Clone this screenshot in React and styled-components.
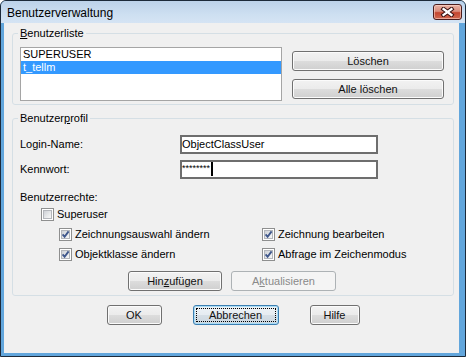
import React from 'react';
import styled, { createGlobalStyle } from 'styled-components';

const GlobalStyle = createGlobalStyle`
  html, body {
    margin: 0;
    padding: 0;
    background: #ffffff;
  }
  body {
    font-family: "Liberation Sans", Arial, sans-serif;
    font-size: 11px;
    color: #000;
  }
`;

const Window = styled.div`
  width: 466px;
  height: 357px;
  box-sizing: border-box;
  border: 1px solid #1c2a3a;
  border-radius: 6px 6px 0 0;
  overflow: hidden;
  display: flex;
  flex-direction: column;
  background: #62a6dc;
`;

const TitleBar = styled.div`
  height: 22px;
  flex: none;
  display: flex;
  align-items: center;
  justify-content: space-between;
  padding: 0 3px 0 6px;
  background: linear-gradient(#bcd2ea, #cddff1 60%, #d5e4f4);
`;

const Title = styled.span`
  font-size: 12px;
  line-height: 14px;
  margin-top: 2px;
`;

const CloseButton = styled.div`
  width: 29px;
  height: 16px;
  box-sizing: border-box;
  border: 1px solid #4a1c1c;
  border-radius: 3px;
  background: linear-gradient(#e9b2a4 0%, #d98c7c 45%, #c4452f 55%, #d06a52 100%);
  box-shadow: inset 0 0 0 1px rgba(255, 220, 210, 0.55);
  display: flex;
  align-items: center;
  justify-content: center;
`;

const Client = styled.div`
  flex: 1;
  margin: 0 6px 3px 3px;
  padding: 4px 5px 0 8px;
  background: #f0f0f0;
  display: flex;
  flex-direction: column;
`;

const Group = styled.fieldset`
  margin: 0;
  min-width: 0;
  padding: ${p => p.$pad};
  border: 1px solid #d5dfe5;
  border-radius: 3px;

  & + & {
    margin-top: 7px;
  }
`;

const Legend = styled.legend`
  padding: 0 2px;
  margin-left: -2px;
  line-height: 13px;
`;

const Accel = styled.span`
  text-decoration: underline;
`;

const ListRow = styled.div`
  display: flex;
  gap: 10px;
`;

const ListBox = styled.div`
  width: 262px;
  height: 54px;
  box-sizing: border-box;
  border: 1px solid #a5a5a5;
  background: #fff;
`;

const ListItem = styled.div`
  line-height: 13px;
  padding-left: 2px;
  background: ${p => (p.$selected ? '#3399ff' : 'transparent')};
  color: ${p => (p.$selected ? '#fff' : '#000')};
`;

const ButtonColumn = styled.div`
  flex: 1;
  display: flex;
  flex-direction: column;
  gap: 8px;
  margin-top: 4px;
`;

const Button = styled.button`
  width: ${p => (p.$w ? `${p.$w}px` : '100%')};
  height: 20px;
  box-sizing: border-box;
  padding: 0;
  margin: 0;
  font-family: "Liberation Sans", Arial, sans-serif;
  font-size: 11px;
  font-weight: 400;
  color: #111;
  border: 1px solid #707070;
  border-radius: 3px;
  background: linear-gradient(#f2f2f2 0%, #ebebeb 49%, #dddddd 50%, #cfcfcf 100%);
  box-shadow: inset 0 0 0 1px #fbfbfb;

  &:disabled {
    color: #8a8a8a;
    border-color: #adb2b5;
    background: #f4f4f4;
    box-shadow: none;
  }
`;

const DefaultButton = styled(Button)`
  border-color: #3c7fb1;
  background: linear-gradient(#eef3f7 0%, #e6ecf1 49%, #d6dfe6 50%, #ccd7e0 100%);
  box-shadow: inset 0 0 0 1px #a9dcf6;
  outline: 1px dotted #000;
  outline-offset: -4px;
`;

const FormGrid = styled.div`
  display: grid;
  grid-template-columns: 160px 198px;
  row-gap: 6px;
  align-items: center;
`;

const FieldLabel = styled.span`
  line-height: 13px;
`;

const TextBox = styled.div`
  height: 19px;
  box-sizing: border-box;
  border: 2px solid #6e6e6e;
  background: #fff;
  display: flex;
  align-items: ${p => (p.$top ? 'flex-start' : 'center')};
  line-height: 13px;
`;

const Stars = styled.span`
  font-size: 9px;
  line-height: 9px;
  margin-top: 2px;
`;

const Caret = styled.span`
  width: 2px;
  height: 14px;
  margin-left: 1px;
  background: #000;
`;

const SectionLabel = styled.div`
  line-height: 13px;
  margin-top: 12px;
`;

const CheckRow = styled.div`
  height: 20px;
  padding-left: 21px;
  display: flex;
  align-items: center;
`;

const CheckGrid = styled.div`
  display: grid;
  grid-template-columns: 203px auto;
  grid-auto-rows: 20px;
  padding-left: 39px;
`;

const CheckItem = styled.label`
  display: flex;
  align-items: center;
  gap: 3px;
  line-height: 13px;
`;

const Box = styled.span`
  width: 13px;
  height: 13px;
  box-sizing: border-box;
  flex: none;
  border: 1px solid #8e8f8f;
  background: #fff;
  padding: 1px;
  display: flex;
`;

const BoxInner = styled.span`
  flex: 1;
  border: 1px solid #b3b6bb;
  background: linear-gradient(135deg, #cdd0d5 0%, #e6e8ea 55%, #f7f7f7 100%);
  display: flex;
  align-items: center;
  justify-content: center;
`;

const ActionRow = styled.div`
  display: flex;
  justify-content: center;
  gap: 9px;
  margin-top: 7px;
`;

const Footer = styled.div`
  display: flex;
  justify-content: center;
  gap: 31px;
  margin-top: 9px;
`;

const CloseIcon = () => (
  <svg width="15" height="10" viewBox="0 0 15 10">
    <g strokeLinecap="square">
      <path d="M3.5 2 L11.5 8 M11.5 2 L3.5 8" stroke="#3a1313" strokeWidth="4.2" />
      <path d="M3.5 2 L11.5 8 M11.5 2 L3.5 8" stroke="#ffffff" strokeWidth="2.2" />
    </g>
  </svg>
);

const Checkbox = ({ checked, children }) => (
  <CheckItem>
    <Box>
      <BoxInner>
        {checked && (
          <svg width="9" height="9" viewBox="0 0 9 9" style={{ margin: -1 }}>
            <path d="M1.6 4.4 L3.6 6.8 L7.6 1.4" fill="none" stroke="#40588c" strokeWidth="1.9" />
          </svg>
        )}
      </BoxInner>
    </Box>
    {children}
  </CheckItem>
);

const App = () => {
  return (
    <Window>
      <GlobalStyle />
      <TitleBar>
        <Title>Benutzerverwaltung</Title>
        <CloseButton>
          <CloseIcon />
        </CloseButton>
      </TitleBar>
      <Client>
        <Group $pad="7px 9px 3px 7px">
          <Legend>
            <Accel>B</Accel>enutzerliste
          </Legend>
          <ListRow>
            <ListBox>
              <ListItem>SUPERUSER</ListItem>
              <ListItem $selected>t_tellm</ListItem>
            </ListBox>
            <ButtonColumn>
              <Button>Löschen</Button>
              <Button>Alle löschen</Button>
            </ButtonColumn>
          </ListRow>
        </Group>

        <Group $pad="10px 9px 4px 7px">
          <Legend>
            Benutzer<Accel>p</Accel>rofil
          </Legend>
          <FormGrid>
            <FieldLabel>Login-Name:</FieldLabel>
            <TextBox>ObjectClassUser</TextBox>
            <FieldLabel>Kennwort:</FieldLabel>
            <TextBox $top>
              <Stars>********</Stars>
              <Caret />
            </TextBox>
          </FormGrid>
          <SectionLabel>Benutzerrechte:</SectionLabel>
          <CheckRow>
            <Checkbox>Superuser</Checkbox>
          </CheckRow>
          <CheckGrid>
            <Checkbox checked>Zeichnungsauswahl ändern</Checkbox>
            <Checkbox checked>Zeichnung bearbeiten</Checkbox>
            <Checkbox checked>Objektklasse ändern</Checkbox>
            <Checkbox checked>Abfrage im Zeichenmodus</Checkbox>
          </CheckGrid>
          <ActionRow>
            <Button $w={94}>
              Hin<Accel>z</Accel>ufügen
            </Button>
            <Button $w={105} disabled>
              A<Accel>k</Accel>tualisieren
            </Button>
          </ActionRow>
        </Group>

        <Footer>
          <Button $w={55}>OK</Button>
          <DefaultButton $w={86}>Abbrechen</DefaultButton>
          <Button $w={50}>Hilfe</Button>
        </Footer>
      </Client>
    </Window>
  );
};

export default App;
